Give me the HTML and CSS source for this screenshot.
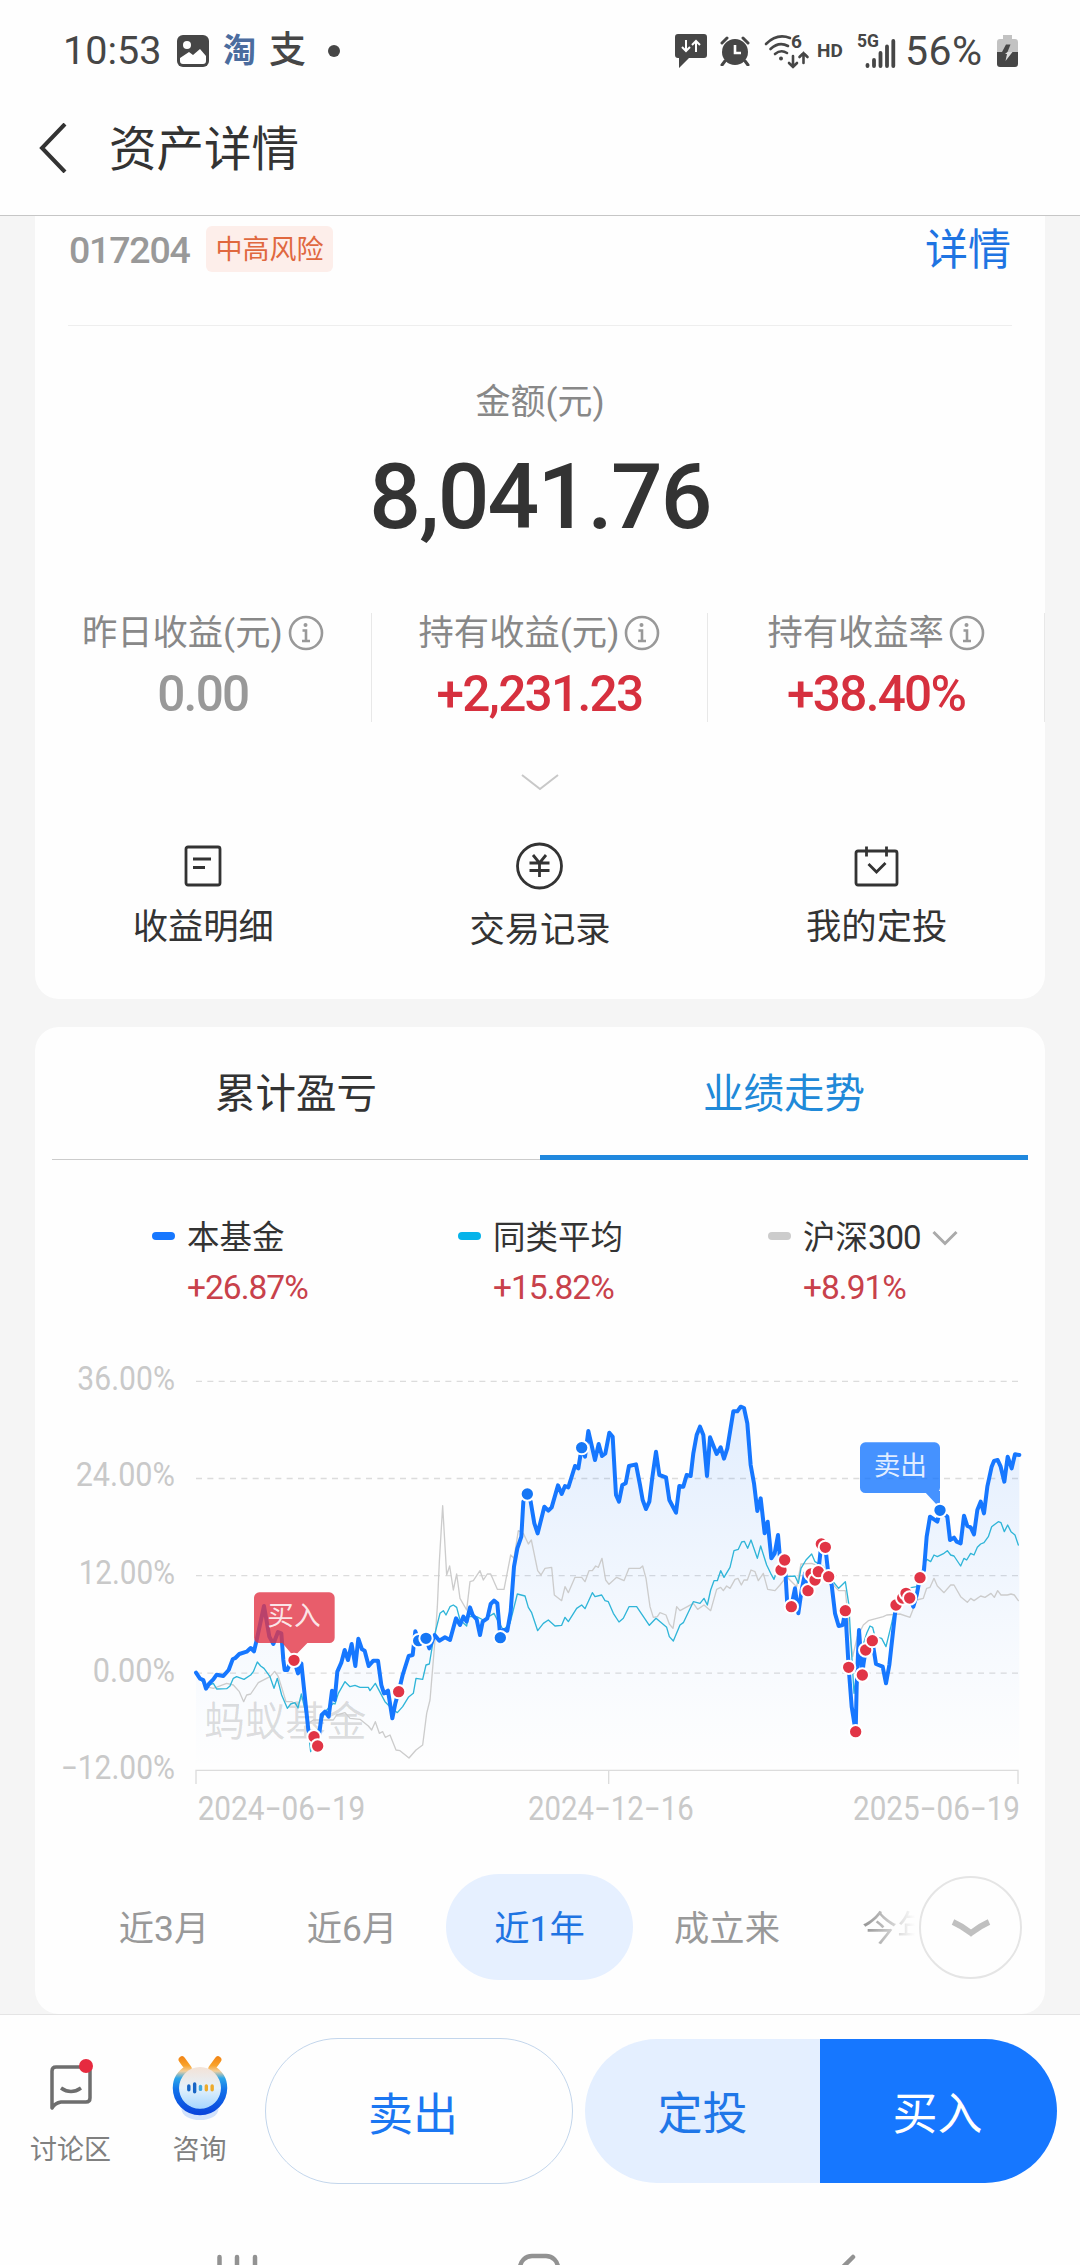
FILE: index.html
```html
<!DOCTYPE html>
<html lang="zh-CN">
<head>
  <meta charset="UTF-8" />
  <meta name="viewport" content="width=device-width, initial-scale=1" />
  <title>资产详情</title>
  <link rel="stylesheet" href="styles.css">
</head>
<body>

  <div class="status-bar">
    <span class="time">10:53</span>
    <svg class="ic-photo" width="32" height="32" viewBox="0 0 32 32"><rect width="32" height="32" rx="6" fill="#464646"/><circle cx="10" cy="10" r="4" fill="#fff"/><path d="M3 23l9-6 4 3 7-6 6 7v5a3 3 0 0 1-3 3H6a3 3 0 0 1-3-3z" fill="#fff"/></svg>
    <span class="app-tao">淘</span>
    <span class="app-zhi">支</span>
    <span class="dot"></span>
    <div class="status-right">
      <svg width="32" height="34" viewBox="0 0 32 34"><path d="M3 0h26a3 3 0 0 1 3 3v18a3 3 0 0 1-3 3H14L4 34V24H3a3 3 0 0 1-3-3V3a3 3 0 0 1 3-3z" fill="#464646"/><path d="M11 6v11M7 13l4 4 4-4M21 18V7M17 11l4-4 4 4" fill="none" stroke="#fff" stroke-width="2"/></svg>
      <svg class="ic-alarm" width="30" height="30" viewBox="0 0 30 30"><circle cx="15" cy="16" r="13" fill="#464646"/><path d="M2 7l5-5M28 7l-5-5M5 25l-3 4M25 25l3 4" stroke="#464646" stroke-width="3" stroke-linecap="round"/><path d="M15 9v8h6" fill="none" stroke="#fff" stroke-width="2.6"/></svg>
      <svg class="ic-wifi" width="46" height="50" viewBox="0 -8 46 50"><g fill="none" stroke="#464646" stroke-width="2.6" stroke-linecap="round"><path d="M2 10Q13-1 26 4M6.500 15Q15 7 24 12M11 20Q17 15 23 19"/><path d="M29 22v11M25 29l4 4 4-4M39.500 29V19M35.500 23l4-4 4 4"/></g><circle cx="17" cy="24.500" r="2" fill="#464646"/><text x="27" y="14" font-size="19" font-weight="700" fill="#464646">6</text></svg>
      <span class="hd">HD</span>
      <svg class="ic-signal" width="40" height="50" viewBox="0 -8 40 50"><text x="0" y="13" font-size="17.500" font-weight="700" fill="#464646" textLength="22">5G</text><path d="M10.500 31v1M17 26v6M23.500 19v13M30 12.500v19.500M36.300 7v25" stroke="#464646" stroke-width="3.800" stroke-linecap="round"/></svg>
      <span class="battery-num">56%</span>
      <svg width="21" height="32" viewBox="0 0 21 32"><path d="M6 0h9v4h3a3 3 0 0 1 3 3v10H0V7a3 3 0 0 1 3-3h3z" fill="#c2c2c2"/><path d="M0 17h21v12a3 3 0 0 1-3 3H3a3 3 0 0 1-3-3z" fill="#464646"/><path d="M9 9.500h4.500L10.500 17H5z" fill="#464646"/><path d="M10.500 17H15.500L8.500 26l1.500-7H8z" fill="#ddd"/></svg>
    </div>
  </div>

  <header class="nav-bar">
    <svg width="28" height="50" viewBox="0 0 28 50"><path d="M26 1L3 25l23 24" fill="none" stroke="#333" stroke-width="4"/></svg>
    <h1>资产详情</h1>
  </header>

  <main>
    <section class="card asset-card">
      <div class="fund-row">
        <span class="fund-code">017204</span>
        <span class="risk">中高风险</span>
        <a class="detail">详情</a>
      </div>

      <div class="amount-label">金额(元)</div>
      <div class="amount">8,041.76</div>

      <div class="stats">
        <div class="stat">
          <div class="stat-label">昨日收益(元)<svg class="info" viewBox="0 0 36 36"><circle cx="18" cy="18" r="16"/><path d="M14.500 15.500H18v10.500M14 26h8"/><circle class="info-dot" cx="17.500" cy="10" r="2"/></svg></div>
          <div class="stat-value gray">0.00</div>
        </div>
        <div class="stat">
          <div class="stat-label">持有收益(元)<svg class="info" viewBox="0 0 36 36"><circle cx="18" cy="18" r="16"/><path d="M14.500 15.500H18v10.500M14 26h8"/><circle class="info-dot" cx="17.500" cy="10" r="2"/></svg></div>
          <div class="stat-value">+2,231.23</div>
        </div>
        <div class="stat">
          <div class="stat-label">持有收益率<svg class="info" viewBox="0 0 36 36"><circle cx="18" cy="18" r="16"/><path d="M14.500 15.500H18v10.500M14 26h8"/><circle class="info-dot" cx="17.500" cy="10" r="2"/></svg></div>
          <div class="stat-value">+38.40%</div>
        </div>
      </div>

      <svg class="expand" width="38" height="17" viewBox="0 0 38 17"><path d="M1 1l18 14L37 1" fill="none" stroke="#c8c8c8" stroke-width="2"/></svg>

      <div class="actions">
        <div class="action">
          <svg width="48" height="48" viewBox="0 0 48 48"><rect x="7" y="5" width="34" height="38" rx="2"/><path d="M14 17h18M14 25.500h12"/></svg>
          <span>收益明细</span>
        </div>
        <div class="action mid">
          <svg width="48" height="48" viewBox="0 0 48 48"><circle cx="23.500" cy="24" r="22"/><path d="M17 13l6.500 8 6.500-8M13.500 21h20M13.500 28.500h20M23.500 21v14"/></svg>
          <span>交易记录</span>
        </div>
        <div class="action">
          <svg width="48" height="48" viewBox="0 0 48 48"><rect x="3" y="9" width="41" height="34" rx="2"/><path d="M13.500 4.500v10M33.500 4.500v10M15.500 22l8 8 9-9"/></svg>
          <span>我的定投</span>
        </div>
      </div>
    </section>

    <section class="card chart-card">
      <div class="tabs">
        <div class="tab">累计盈亏</div>
        <div class="tab active">业绩走势</div>
      </div>

      <div class="legend">
        <div class="legend-item">
          <i class="mark blue"></i>
          <div><p>本基金</p><b>+26.87%</b></div>
        </div>
        <div class="legend-item">
          <i class="mark cyan"></i>
          <div><p>同类平均</p><b>+15.82%</b></div>
        </div>
        <div class="legend-item">
          <i class="mark silver"></i>
          <div><p>沪深<span class="num">300</span><svg width="26" height="16" viewBox="0 0 26 16"><path d="M1.500 2L13 13.500 24.500 2" fill="none" stroke="#aaa" stroke-width="3"/></svg></p><b>+8.91%</b></div>
        </div>
      </div>

      <svg class="chart" width="1000" height="500" viewBox="0 0 3000 1500">
        <defs>
          <linearGradient id="area" gradientUnits="userSpaceOnUse" x1="0" y1="200" x2="0" y2="1290">
            <stop offset="0" stop-color="#1677ff" stop-opacity="0.120"/>
            <stop offset="0.600" stop-color="#1677ff" stop-opacity="0.040"/>
            <stop offset="1" stop-color="#1677ff" stop-opacity="0"/>
          </linearGradient>
        </defs>

        <g class="grid">
          <path d="M468 124H2934M468 415.500H2934M468 707H2934M468 999.500H2934"/>
          <path class="axis" d="M468 1332V1291H2934V1332M1706 1291V1332"/>
        </g>

        <g class="labels">
          <text x="112" y="150" textLength="293" lengthAdjust="spacingAndGlyphs">36.00%</text>
          <text x="107" y="439" textLength="298" lengthAdjust="spacingAndGlyphs">24.00%</text>
          <text x="116" y="732" textLength="289" lengthAdjust="spacingAndGlyphs">12.00%</text>
          <text x="158" y="1025" textLength="247" lengthAdjust="spacingAndGlyphs">0.00%</text>
          <text x="62" y="1316" textLength="343" lengthAdjust="spacingAndGlyphs">−12.00%</text>
          <text x="473" y="1440" textLength="503" lengthAdjust="spacingAndGlyphs">2024−06−19</text>
          <text x="1464" y="1440" textLength="497" lengthAdjust="spacingAndGlyphs">2024−12−16</text>
          <text x="2439" y="1440" textLength="501" lengthAdjust="spacingAndGlyphs">2025−06−19</text>
        </g>

        <path id="fill" fill="url(#area)" d=""/>
        <text class="watermark" x="492" y="1188">蚂蚁基金</text>

        <polyline class="line-hs" points="468,998 498,1040 520,1045 560,1030 580,1035 598,1055 611,1085 620,1065 632,1062 655,1028 690,1010 704,994 715,1010 738,1085 755,1085 770,1095 790,1070 805,1150 820,1140 880,1140 890,1125 915,1118 930,1135 960,1138 985,1158 995,1170 1006,1145 1018,1180 1028,1175 1036,1192 1050,1185 1068,1230 1080,1232 1107,1254 1128,1230 1148,1215 1160,1120 1170,1080 1185,900 1192,800 1198,665 1208,497 1220,705 1229,678 1240,750 1250,702 1260,775 1280,810 1290,725 1300,722 1320,692 1330,720 1342,702 1352,702 1372,748 1392,748 1412,645 1422,655 1435,572 1450,580 1465,612 1474,600 1493,692 1503,705 1515,685 1535,682 1543,765 1565,782 1575,740 1585,758 1605,712 1625,712 1635,725 1647,692 1657,692 1667,678 1675,682 1686,655 1697,720 1707,733 1730,712 1752,722 1767,685 1800,685 1808,678 1818,715 1830,800 1840,832 1852,830 1860,818 1878,825 1888,852 1899,865 1910,800 1920,812 1960,790 1973,808 1992,795 2012,812 2030,748 2042,742 2050,752 2060,738 2070,745 2085,718 2094,715 2104,735 2112,720 2122,720 2133,690 2145,695 2155,722 2170,700 2183,748 2205,752 2220,735 2240,710 2270,740 2283,672 2315,670 2340,680 2380,735 2396,752 2416,752 2426,850 2438,950 2452,890 2470,855 2485,842 2530,830 2540,825 2580,822 2610,832 2630,780 2650,775 2660,745 2670,742 2682,715 2692,738 2712,758 2732,735 2742,735 2762,770 2782,787 2792,775 2802,782 2822,768 2835,772 2853,760 2863,772 2873,752 2883,765 2902,765 2913,762 2923,765 2935,782"/>
        <polyline class="line-avg" points="468,998 498,1040 520,1030 530,1047 560,1046 570,1038 580,1015 590,1010 612,1018 632,1005 640,995 652,966 662,978 672,985 690,1010 702,1045 712,1015 725,1065 742,1105 752,1092 765,1088 774,1104 784,1062 800,1130 812,1235 830,1180 855,1115 880,1090 885,1092 895,1060 915,1025 930,1040 945,1036 960,1042 985,1042 990,1052 1006,1030 1035,1085 1050,1100 1072,1118 1088,1100 1105,1072 1120,1060 1128,1015 1148,1018 1158,975 1168,972 1180,900 1200,820 1210,812 1218,825 1230,800 1240,795 1250,802 1260,840 1280,858 1285,830 1310,830 1330,840 1362,820 1372,840 1390,870 1410,850 1432,762 1455,768 1465,802 1475,818 1493,872 1510,850 1525,840 1545,858 1565,856 1575,832 1585,845 1610,805 1625,795 1635,806 1657,758 1665,770 1685,765 1695,782 1705,785 1720,820 1737,846 1750,835 1767,800 1790,800 1828,856 1848,835 1880,862 1888,890 1900,903 1920,855 1930,848 1960,785 1980,790 1992,775 2002,795 2012,750 2022,722 2032,722 2042,692 2052,712 2070,682 2082,632 2095,628 2105,606 2113,604 2123,625 2133,600 2152,655 2162,618 2180,675 2192,700 2202,718 2212,690 2242,710 2265,708 2275,730 2283,685 2298,660 2315,642 2325,665 2350,680 2375,720 2396,745 2416,725 2426,790 2442,1060 2455,960 2480,880 2490,858 2498,862 2505,890 2525,895 2538,920 2555,850 2568,790 2600,745 2630,740 2645,700 2652,670 2661,658 2672,665 2682,645 2692,650 2712,640 2722,632 2732,645 2742,648 2762,678 2772,655 2780,660 2792,640 2802,645 2812,622 2822,612 2832,608 2845,590 2855,560 2875,545 2883,548 2893,575 2903,555 2913,575 2925,585 2935,615"/>
        <polyline id="fund" class="line-fund" points="468,998 480,1016 490,1020 498,1046 508,1030 520,1018 530,1004 550,1008 566,990 578,958 586,954 598,942 620,935 632,924 642,934 650,900 672,798 688,890 700,912 714,876 724,880 730,960 734,990 742,990 748,975 762,960 774,1000 784,970 805,1170 812,1190 822,1190 833,1218 845,1125 855,1115 866,1130 876,1052 884,1080 892,995 904,968 914,930 924,960 935,912 946,978 955,896 966,928 974,932 986,978 1000,962 1014,962 1024,1035 1032,1060 1044,1052 1057,1135 1066,1090 1076,1055 1088,1005 1106,948 1118,945 1126,874 1135,902 1158,895 1168,925 1184,885 1198,902 1215,892 1230,900 1248,835 1260,855 1270,830 1280,845 1290,802 1298,825 1310,838 1320,885 1328,845 1342,835 1352,792 1362,782 1372,790 1381,893 1390,870 1402,872 1412,815 1422,680 1432,625 1444,590 1450,485 1462,462 1472,485 1483,550 1493,580 1513,500 1525,512 1535,502 1554,436 1565,462 1575,438 1585,442 1605,378 1615,385 1625,323 1635,350 1645,273 1665,360 1676,312 1686,348 1696,340 1708,278 1718,290 1728,465 1737,485 1747,435 1757,430 1767,378 1788,373 1800,435 1808,480 1818,507 1828,485 1837,412 1848,335 1858,405 1878,412 1888,480 1908,518 1918,438 1930,440 1940,405 1952,408 1960,340 1970,285 1980,260 1990,285 2001,408 2010,292 2030,342 2042,322 2052,356 2062,325 2080,214 2092,214 2102,200 2112,204 2122,250 2132,375 2142,430 2152,513 2162,475 2174,580 2183,545 2194,655 2204,640 2214,585 2223,690 2234,660 2242,795 2254,800 2265,745 2275,820 2285,750 2295,700 2304,740 2313,702 2325,722 2335,695 2344,612 2356,622 2366,710 2375,735 2385,820 2396,858 2408,855 2416,812 2426,982 2435,1100 2447,1175 2450,1040 2457,870 2467,1005 2470,975 2477,930 2487,920 2497,902 2508,972 2528,980 2538,1030 2548,975 2568,795 2580,775 2598,760 2609,774 2620,800 2630,765 2640,713 2652,690 2660,590 2670,530 2692,545 2700,511 2722,530 2730,600 2742,593 2750,605 2762,610 2772,527 2782,558 2792,562 2802,583 2812,510 2822,485 2832,520 2842,440 2855,380 2862,363 2873,360 2882,380 2893,425 2903,350 2915,385 2925,343 2938,345"/>

        <g id="points"></g>

        <g class="tip-buy">
          <path d="M658 757H868a16 16 0 0 1 16 16V893a16 16 0 0 1-16 16H658a16 16 0 0 1-16-16V773a16 16 0 0 1 16-16zM722 903H808L762 950z"/>
          <text x="682" y="856">买入</text>
        </g>
        <g class="tip-sell">
          <path d="M2476 307H2684a16 16 0 0 1 16 16V443a16 16 0 0 1-16 16H2476a16 16 0 0 1-16-16V323a16 16 0 0 1 16-16zM2652 453H2700V505z"/>
          <text x="2501" y="404">卖出</text>
        </g>
        <circle class="buy" cx="762" cy="961" r="20"/>
        <circle class="sell" cx="2700" cy="511" r="20"/>
      </svg>

      <div class="ranges">
        <span>近<em>3</em>月</span>
        <span>近<em>6</em>月</span>
        <span class="on">近<em>1</em>年</span>
        <span>成立来</span>
        <span class="fade">今年来</span>
        <button class="more"><svg width="40" height="20" viewBox="0 0 40 20"><path d="M2 4q9 4 18 11 9-7 18-11" fill="none" stroke="#c0c0c0" stroke-width="6"/></svg></button>
      </div>
    </section>
  </main>

  <footer class="trade-bar">
    <div class="tool">
      <svg width="60" height="72" viewBox="0 0 60 72"><path d="M11 59V22q0-4 4-4h30q4 0 4 4v27q0 4-4 4H20q-6 1-9 6z" fill="none" stroke="#6e6e6e" stroke-width="3.500" stroke-linejoin="round"/><path d="M20 39q10 7 20 0" fill="none" stroke="#6e6e6e" stroke-width="3.500"/><circle cx="45" cy="17" r="7" fill="#e62a3f"/></svg>
      <span>讨论区</span>
    </div>
    <div class="tool">
      <svg width="60" height="74" viewBox="0 0 60 74">
        <defs>
          <linearGradient id="ring" gradientUnits="userSpaceOnUse" x1="0" y1="6" x2="0" y2="66"><stop offset="0" stop-color="#f07f12"/><stop offset="0.180" stop-color="#f9a22a"/><stop offset="0.280" stop-color="#f3cf9c"/><stop offset="0.400" stop-color="#2ba6ea"/><stop offset="0.600" stop-color="#1272ea"/><stop offset="1" stop-color="#0a45dc"/></linearGradient>
          <linearGradient id="face" x1="0" y1="0" x2="0" y2="1"><stop offset="0" stop-color="#f3e2d6"/><stop offset="0.500" stop-color="#e4f1fb"/><stop offset="1" stop-color="#a5d6ff"/></linearGradient>
        </defs>
        <ellipse cx="30" cy="62" rx="19" ry="11" fill="#d3e3fc"/>
        <path d="M11.500 11L18 20C9 25 5.500 33 5.500 40a24.500 24.500 0 0 0 49 0C54.500 33 51 25 42 20L48.500 11" fill="none" stroke="url(#ring)" stroke-width="7" stroke-linecap="round" stroke-linejoin="round"/>
        <circle cx="30" cy="40" r="21.500" fill="url(#face)"/>
        <path d="M18.500 38v4M24.500 36v8" stroke="#1765c6" stroke-width="3.500" stroke-linecap="round"/>
        <path d="M30.500 38.500v3" stroke="#41a8e0" stroke-width="3.500" stroke-linecap="round"/>
        <path d="M36.500 38v4M42.500 38v4" stroke="#edaa2b" stroke-width="3.500" stroke-linecap="round"/>
      </svg>
      <span>咨询</span>
    </div>
    <button class="btn-sell">卖出</button>
    <div class="btn-group">
      <button class="btn-plan">定投</button>
      <button class="btn-buy">买入</button>
    </div>
  </footer>

  <div class="system-nav">
    <svg width="1080" height="12" viewBox="0 0 1080 12"><g fill="none" stroke="#929292" stroke-width="4.500" stroke-linecap="round"><path d="M219.500 4v20M237 4v20M255 4v20"/><rect x="520" y="3" width="38" height="38" rx="12"/><path d="M853 4l-24 24"/></g></svg>
  </div>

  <script>
    // area under the fund line, down to the axis
    const pts = document.getElementById('fund').getAttribute('points');
    document.getElementById('fill').setAttribute('d', 'M' + pts.split(' ').join('L') + 'V1290H468Z');

    const trades = {
      sell: [[1136, 902], [1158, 895], [1381, 893], [1462, 462], [1625, 323]],
      buy: [[822, 1190], [833, 1218], [1076, 1055], [2223, 690], [2234, 660], [2254, 800], [2304, 752],
        [2313, 702], [2325, 720], [2335, 695], [2344, 612], [2356, 622], [2366, 710], [2416, 812],
        [2426, 982], [2447, 1175], [2467, 1005], [2477, 930], [2497, 902], [2568, 795], [2588, 774],
        [2598, 760], [2609, 774], [2640, 713]]
    };

    const box = document.getElementById('points');
    Object.keys(trades).forEach(type => {
      trades[type].forEach(([x, y]) => {
        const c = document.createElementNS('http://www.w3.org/2000/svg', 'circle');
        c.setAttribute('class', type);
        c.setAttribute('cx', x);
        c.setAttribute('cy', y);
        c.setAttribute('r', 20);
        box.appendChild(c);
      });
    });
  </script>

</body>
</html>
```
FILE: styles.css
```css
* {
  margin: 0;
  padding: 0;
  box-sizing: border-box;
}

body {
  width: 1080px;
  height: 2265px;
  overflow: hidden;
  display: flex;
  flex-direction: column;
  background: #fefefe;
  color: #333;
  font-family: Roboto, "Noto Sans CJK SC", sans-serif;
}

svg {
  display: block;
  flex-shrink: 0;
}

button {
  border: none;
  background: none;
  font-family: inherit;
}

/* status bar */
.status-bar {
  height: 101px;
  padding: 0 62px 0 63px;
  display: flex;
  align-items: center;
  color: #464646;
}

.time {
  width: 114px;
  font-size: 39.500px;
}

.app-tao {
  width: 33px;
  margin-left: 14px;
  font-size: 33px;
  font-weight: 700;
  line-height: 40px;
  color: #4b6c9e;
}

.app-zhi {
  margin-left: 13px;
  font-size: 37px;
  font-weight: 500;
  line-height: 40px;
}

.dot {
  width: 12px;
  height: 12px;
  margin-left: 22px;
  border-radius: 50%;
  background: #464646;
}

.status-right {
  margin-left: auto;
  display: flex;
  align-items: center;
}

.ic-alarm {
  margin-left: 13px;
}

.ic-wifi {
  margin-left: 14px;
}

.hd {
  margin-left: 7px;
  width: 27px;
  font-size: 19px;
  font-weight: 700;
}

.ic-signal {
  margin-left: 13px;
}

.battery-num {
  width: 92px;
  margin-left: 8px;
  font-size: 41px;
  letter-spacing: 0.500px;
}

/* title */
.nav-bar {
  height: 115px;
  padding: 0 0 20px 39px;
  display: flex;
  align-items: center;
  border-bottom: 1px solid #c6c6c6;
}

.nav-bar h1 {
  margin-left: 42px;
  margin-top: 4px;
  font-size: 47.500px;
  font-weight: 400;
  line-height: 60px;
}

main {
  height: 1798px;
  padding: 0 35px;
  background: #f5f5f5;
}

.card {
  background: #fefefe;
  overflow: hidden;
}

.asset-card {
  height: 783px;
  border-radius: 0 0 24px 24px;
}

.fund-row {
  height: 110px;
  margin: 0 33px;
  padding-bottom: 41px;
  display: flex;
  align-items: center;
  border-bottom: 1px solid #eee;
}

.fund-code {
  width: 137px;
  margin-left: 1px;
  font-size: 37.500px;
  font-weight: 500;
  letter-spacing: -1.200px;
  color: #999;
}

.risk {
  width: 127px;
  height: 46px;
  margin-top: -3px;
  border-radius: 6px;
  background: #fdeeea;
  color: #e0683f;
  font-size: 27px;
  line-height: 48px;
  text-align: center;
}

.detail {
  margin-left: auto;
  margin-right: 1px;
  font-size: 43px;
  line-height: 60px;
  color: #1f74e2;
}

.amount-label {
  margin-top: 51px;
  font-size: 35px;
  line-height: 52px;
  text-align: center;
  color: #888;
}

.amount {
  margin-top: 15px;
  font-size: 91px;
  font-weight: 500;
  line-height: 106px;
  letter-spacing: -1.800px;
  text-align: center;
}

.stats {
  height: 102px;
  margin-top: 63px;
  display: grid;
  grid-template-columns: repeat(3, 1fr);
}

.stat {
  border-right: 1px solid #e8e8e8;
}

.stat-label {
  height: 40px;
  display: flex;
  align-items: center;
  justify-content: center;
  font-size: 35.300px;
  line-height: 40px;
  color: #888;
}

.info {
  width: 36px;
  height: 36px;
  margin-left: 5px;
  fill: none;
  stroke: #999;
  stroke-width: 2.600;
}

.info .info-dot {
  fill: #999;
  stroke: none;
}

.stat-value {
  margin-top: 13px;
  font-size: 49.500px;
  font-weight: 500;
  line-height: 56px;
  letter-spacing: -1.700px;
  text-align: center;
  color: #d6303e;
}

.stat-value.gray {
  color: #999;
}

.expand {
  margin: 59px auto 0;
}

.actions {
  margin-top: 51px;
  display: grid;
  grid-template-columns: repeat(3, 1fr);
}

.action {
  display: flex;
  flex-direction: column;
  align-items: center;
  font-size: 35.300px;
  line-height: 50px;
}

.action svg {
  fill: none;
  stroke: #333;
  stroke-width: 2.800;
}

.action span {
  margin-top: 12px;
}

.action.mid span {
  margin-top: 15px;
}

/* chart card */
.chart-card {
  height: 987px;
  margin-top: 28px;
  border-radius: 24px;
}

.tabs {
  height: 133px;
  margin: 0 17px;
  display: flex;
}

.tab {
  flex: 1;
  padding-top: 37px;
  font-size: 40.500px;
  line-height: 60px;
  text-align: center;
  border-bottom: 1px solid #ccc;
}

.tab.active {
  color: #2089d8;
  border-bottom: 5px solid #2088de;
}

.legend {
  height: 180px;
  padding: 52px 0 0 117px;
  display: flex;
}

.legend-item {
  flex: 0 0 306px;
  display: flex;
}

.legend-item:nth-child(2) {
  flex-basis: 310px;
}

.legend-item:nth-child(3) {
  flex-basis: auto;
}

.mark {
  width: 23px;
  height: 8px;
  margin-top: 20px;
  margin-right: 12px;
  border-radius: 4px;
}

.blue {
  background: #1677ff;
}

.cyan {
  background: #05b3ea;
}

.silver {
  background: #ccc;
}

.legend p {
  display: flex;
  align-items: center;
  font-size: 32.500px;
  line-height: 52px;
}

.legend p svg {
  margin-left: 11px;
}

.legend .num {
  font-size: 33px;
  letter-spacing: -1px;
}

.legend b {
  display: block;
  font-size: 33.500px;
  font-weight: 400;
  line-height: 48px;
  letter-spacing: -1px;
  color: #c8414b;
}

.chart {
  margin-left: 5px;
}

.grid path {
  fill: none;
  stroke: #dcdcdc;
  stroke-width: 4;
  stroke-dasharray: 18 16;
}

.grid .axis {
  stroke-dasharray: none;
}

.labels {
  fill: #c9c9c9;
  font-size: 97px;
}

.watermark {
  fill: #000;
  fill-opacity: 0.130;
  font-size: 122px;
}

.line-fund,
.line-avg,
.line-hs {
  fill: none;
  stroke-linejoin: round;
  stroke-linecap: round;
}

.line-fund {
  stroke: #1677ff;
  stroke-width: 12;
}

.line-avg {
  stroke: #2fb5d8;
  stroke-width: 4;
}

.line-hs {
  stroke: #ccc;
  stroke-width: 4;
}

.buy,
.sell {
  stroke: #fff;
  stroke-width: 6;
}

.buy {
  fill: #e13546;
}

.sell {
  fill: #1677f5;
}

.tip-buy path {
  fill: #e23446;
  fill-opacity: 0.800;
}

.tip-sell path {
  fill: #1677ff;
  fill-opacity: 0.800;
}

.tip-buy text,
.tip-sell text {
  fill: #fff;
  fill-opacity: 0.850;
  font-size: 80px;
}

.ranges {
  height: 106px;
  margin-top: 34px;
  padding-left: 35px;
  display: flex;
  align-items: center;
  position: relative;
}

.ranges span {
  flex: 0 0 188px;
  font-size: 35.300px;
  line-height: 110px;
  height: 106px;
  text-align: center;
  color: #999;
}

.ranges em {
  font-style: normal;
}

.ranges .on {
  flex-basis: 187px;
  border-radius: 53px;
  background: #e6f0ff;
  color: #1f74e2;
}

.ranges .fade {
  background: linear-gradient(90deg, #999 24%, transparent 50%);
  -webkit-background-clip: text;
  background-clip: text;
  color: transparent;
}

/* sits over the scrolled range list */
.more {
  position: absolute;
  right: 23px;
  top: 2px;
  width: 103px;
  height: 103px;
  border: 2px solid #e5e5e5;
  border-radius: 50%;
  background: #fefefe;
  display: flex;
  align-items: center;
  justify-content: center;
}

/* bottom bar */
.trade-bar {
  height: 239px;
  padding: 23px 0 0 6px;
  border-top: 1px solid #e4e4e4;
  display: flex;
}

.tool {
  width: 129px;
  padding-top: 11px;
  display: flex;
  flex-direction: column;
  align-items: center;
  font-size: 27px;
  line-height: 40px;
  color: #808080;
}

.tool svg {
  height: 72px;
  overflow: visible;
}

.tool span {
  margin-top: 9px;
}

.trade-bar button {
  font-size: 45px;
}

.btn-sell {
  width: 308px;
  height: 146px;
  margin-left: 1px;
  padding-right: 12px;
  border: 1px solid #c3d6ec;
  border-radius: 73px;
  color: #1b77f2;
}

.btn-group {
  width: 472px;
  height: 144px;
  margin: 1px 0 0 12px;
  display: flex;
  border-radius: 72px;
  overflow: hidden;
}

.btn-plan {
  flex: 1;
  padding-bottom: 2px;
  background: #e4efff;
  color: #1f77e8;
}

.btn-buy {
  flex: 1;
  padding: 0 2px 2px 0;
  background: #1677ff;
  color: #fff;
}

.system-nav {
  height: 12px;
  overflow: hidden;
}
```
